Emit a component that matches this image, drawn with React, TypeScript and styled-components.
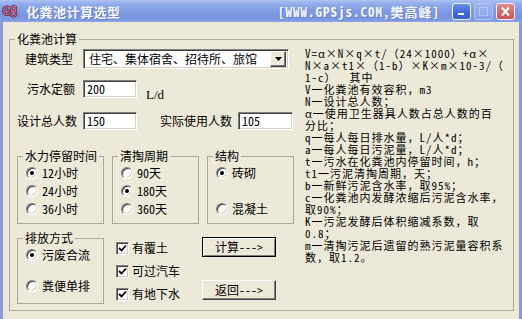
import styled, { createGlobalStyle } from 'styled-components';

const UI_FONT = `"Noto Sans Mono CJK SC", "Noto Sans CJK SC", "Liberation Sans", sans-serif`;

const GlobalStyle = createGlobalStyle`
  html, body { margin: 0; padding: 0; background: #ece9d8; }
  body { font-family: ${UI_FONT}; font-size: 12px; color: #000; }
`;

const Window = styled.div`
  width: 522px;
  height: 319px;
  overflow: hidden;
  display: flex;
  flex-direction: column;
  background: #8b97d9;
`;

const TitleBar = styled.div`
  height: 22px;
  flex-shrink: 0;
  display: flex;
  align-items: center;
  padding: 0 7px 0 2px;
  background: linear-gradient(180deg, #aec2f1 0%, #90aaea 20%, #7d99e0 55%, #7995df 85%, #8ba5e6 100%);
`;

const Title = styled.span`
  margin-left: 8px;
  font: bold 13px ${UI_FONT};
  letter-spacing: 0.5px;
  color: #f6f8ff;
  text-shadow: 1px 1px 0 #6a7fc8;
`;

const Credit = styled.span`
  margin-left: auto;
  margin-right: 12px;
  font: bold 13px ${UI_FONT};
  letter-spacing: 1px;
  color: #f6f8ff;
  text-shadow: 1px 1px 0 #6a7fc8;
`;

const CaptionButtons = styled.div`
  display: flex;
  gap: 3px;
`;

const captionBg = {
  min: 'linear-gradient(180deg, #6b8ee8 0%, #3f67d8 60%, #3a60d2 100%)',
  max: 'linear-gradient(180deg, #9fb5ee 0%, #86a0e6 100%)',
  close: 'linear-gradient(180deg, #e48a8a 0%, #d36464 60%, #c95656 100%)',
};

const CaptionButton = styled.span<{ $kind: 'min' | 'max' | 'close' }>`
  width: 19px;
  height: 17px;
  box-sizing: border-box;
  border: 1px solid ${p => (p.$kind === 'max' ? '#b6c7f2' : '#eef2ff')};
  border-radius: 3px;
  background: ${p => captionBg[p.$kind]};
  display: flex;
  align-items: center;
  justify-content: center;
`;

const Body = styled.div`
  flex: 1;
  margin: 0 3px;
  background: #ece9d8;
  padding: 11px 5px 0 6px;
`;

const GroupBox = styled.fieldset<{ $w?: number; $h: number }>`
  margin: 0;
  padding: 0;
  min-width: 0;
  width: ${p => (p.$w ? `${p.$w}px` : 'auto')};
  height: ${p => p.$h}px;
  box-sizing: border-box;
  border: 1px solid #aca899;
  display: flex;
  flex-direction: column;
  flex-shrink: 0;
`;

const Legend = styled.legend`
  margin-left: 5px;
  padding: 0 2px;
  font-size: 12px;
  line-height: 12px;
`;

const FormArea = styled.div`
  display: flex;
  flex: 1;
`;

const LeftCol = styled.div`
  width: 290px;
  display: flex;
  flex-direction: column;
`;

const Row = styled.div<{ $top: number; $indent: number; $gap?: number }>`
  display: flex;
  align-items: center;
  margin-top: ${p => p.$top}px;
  padding-left: ${p => p.$indent}px;
  gap: ${p => p.$gap ?? 0}px;
`;

const TopRow = styled(Row)`
  align-items: flex-start;
`;

const Label = styled.span<{ $left?: number; $right: number }>`
  margin-left: ${p => p.$left ?? 0}px;
  margin-right: ${p => p.$right}px;
  line-height: 12px;
  white-space: nowrap;
`;

const sunken = `
  box-sizing: border-box;
  border: 1px solid;
  border-color: #808080 #ffffff #ffffff #808080;
  box-shadow: inset 1px 1px 0 #404040, inset -1px -1px 0 #d4d0c8;
  background: #ffffff;
`;

const raised = `
  box-sizing: border-box;
  border: 1px solid;
  border-color: #ffffff #404040 #404040 #ffffff;
  box-shadow: inset -1px -1px 0 #808080, inset 1px 1px 0 #ece9d8;
  background: #ece9d8;
`;

const Combo = styled.div`
  ${sunken}
  width: 206px;
  height: 20px;
  display: flex;
  align-items: center;
  padding: 2px;
`;

const ComboText = styled.span`
  flex: 1;
  padding-left: 3px;
  line-height: 12px;
  white-space: nowrap;
`;

const ComboButton = styled.span`
  ${raised}
  width: 16px;
  height: 16px;
  display: flex;
  align-items: center;
  justify-content: center;
`;

const Field = styled.div<{ $w: number }>`
  ${sunken}
  width: ${p => p.$w}px;
  height: 18px;
  padding-left: 3px;
  display: flex;
  align-items: center;
  line-height: 12px;
`;

const Unit = styled.span`
  margin-left: 9px;
  align-self: flex-end;
  margin-bottom: -3px;
  line-height: 12px;
  font-family: "Liberation Serif", ${UI_FONT};
  font-size: 13px;
`;

const OptionList = styled.div<{ $pb: number }>`
  flex: 1;
  display: flex;
  flex-direction: column;
  justify-content: space-between;
  padding: 2px 0 ${p => p.$pb}px 8px;
`;

const Option = styled.div`
  display: flex;
  align-items: center;
  gap: 4px;
  height: 18px;
  line-height: 12px;
  white-space: nowrap;
`;

const RadioDot = styled.span<{ $on?: boolean }>`
  ${sunken}
  width: 12px;
  height: 12px;
  border-radius: 50%;
  display: flex;
  align-items: center;
  justify-content: center;
  flex-shrink: 0;

  &::after {
    content: '';
    width: 4px;
    height: 4px;
    border-radius: 50%;
    background: ${p => (p.$on ? '#000' : 'transparent')};
  }
`;

const CheckCol = styled.div`
  width: 86px;
  margin-left: 12px;
  padding-top: 7px;
  display: flex;
  flex-direction: column;
  gap: 5px;
`;

const CheckBox = styled.span`
  ${sunken}
  width: 13px;
  height: 13px;
  display: flex;
  align-items: center;
  justify-content: center;
  flex-shrink: 0;
`;

const CheckOption = styled(Option)`
  gap: 3px;
`;

const ButtonCol = styled.div`
  padding-top: 5px;
  display: flex;
  flex-direction: column;
  gap: 23px;
`;

const PushButton = styled.button<{ $default?: boolean }>`
  ${raised}
  width: 74px;
  height: 20px;
  padding: 0;
  font: 12px ${UI_FONT};
  line-height: 12px;
  color: #000;
  ${p =>
    p.$default &&
    `
    border-color: #000000;
    box-shadow: inset 1px 1px 0 #ffffff, inset -1px -1px 0 #808080;
  `}
`;

const Formula = styled.div`
  flex: 1;
  padding: 2px 0 0 5px;
`;

const FormulaLine = styled.div`
  height: 12px;
  line-height: 12px;
  font-size: 11px;
  letter-spacing: 1px;
  white-space: pre;
`;

const formulaLines = [
  'V=α×N×q×t/（24×1000）+α×',
  'N×a×t1×（1-b）×K×m×10-3/（',
  '1-c）  其中',
  'V一化粪池有效容积，m3',
  'N一设计总人数；',
  'α一使用卫生器具人数占总人数的百',
  '分比；',
  'q一每人每日排水量，L/人*d；',
  'a一每人每日污泥量，L/人*d；',
  't一污水在化粪池内停留时间，h；',
  't1一污泥清掏周期，天；',
  'b一新鲜污泥含水率，取95%；',
  'c一化粪池内发酵浓缩后污泥含水率，',
  '取90%；',
  'K一污泥发酵后体积缩减系数，取',
  '0.8；',
  'm一清掏污泥后遗留的熟污泥量容积系',
  '数，取1.2。',
];

const AppIcon = () => (
  <svg width="16" height="14" viewBox="0 0 16 14">
    <path d="M7 3.5 C3 1.5 0.8 5 2 8.5 C3 11.5 7 11.5 7.5 8.5 C7.8 6.5 5.5 6 4.5 7.5" fill="none" stroke="#3a2030" strokeWidth="2.6" />
    <path d="M7 3.5 C3 1.5 0.8 5 2 8.5 C3 11.5 7 11.5 7.5 8.5 C7.8 6.5 5.5 6 4.5 7.5" fill="none" stroke="#e0608a" strokeWidth="1.4" />
    <circle cx="11.5" cy="4.5" r="2.4" fill="none" stroke="#3a2030" strokeWidth="2.4" />
    <circle cx="11.5" cy="9.6" r="2.7" fill="none" stroke="#3a2030" strokeWidth="2.4" />
    <circle cx="11.5" cy="4.5" r="2.4" fill="none" stroke="#e0608a" strokeWidth="1.2" />
    <circle cx="11.5" cy="9.6" r="2.7" fill="none" stroke="#e0608a" strokeWidth="1.2" />
  </svg>
);

const Radio = ({ on, text }: { on?: boolean; text: string }) => (
  <Option>
    <RadioDot $on={on} />
    {text}
  </Option>
);

const Check = ({ text }: { text: string }) => (
  <CheckOption>
    <CheckBox>
      <svg width="9" height="9" viewBox="0 0 9 9">
        <path d="M1 4 L3.5 6.5 L8 1.5" fill="none" stroke="#000" strokeWidth="1.8" />
      </svg>
    </CheckBox>
    {text}
  </CheckOption>
);

export default function App() {
  return (
    <>
      <GlobalStyle />
      <Window>
        <TitleBar>
          <AppIcon />
          <Title>化粪池计算选型</Title>
          <Credit>[WWW.GPSjs.COM,樊高峰]</Credit>
          <CaptionButtons>
            <CaptionButton $kind="min">
              <svg width="13" height="11" viewBox="0 0 13 11">
                <rect x="3" y="7" width="6" height="2" fill="#fff" />
              </svg>
            </CaptionButton>
            <CaptionButton $kind="max">
              <svg width="13" height="11" viewBox="0 0 13 11">
                <rect x="2.5" y="1.5" width="8" height="8" fill="none" stroke="#b3c5f1" strokeWidth="1" />
              </svg>
            </CaptionButton>
            <CaptionButton $kind="close">
              <svg width="13" height="11" viewBox="0 0 13 11">
                <path d="M3 1.5 L10 9.5 M10 1.5 L3 9.5" stroke="#fff" strokeWidth="2" />
              </svg>
            </CaptionButton>
          </CaptionButtons>
        </TitleBar>

        <Body>
          <GroupBox $h={278}>
            <Legend>化粪池计算</Legend>
            <FormArea>
              <LeftCol>
                <Row $top={4} $indent={15}>
                  <Label $right={10}>建筑类型</Label>
                  <Combo>
                    <ComboText>住宅、集体宿舍、招待所、旅馆</ComboText>
                    <ComboButton>
                      <svg width="7" height="4" viewBox="0 0 7 4">
                        <path d="M0 0 H7 L3.5 4 Z" fill="#000" />
                      </svg>
                    </ComboButton>
                  </Combo>
                </Row>

                <Row $top={11} $indent={17}>
                  <Label $right={8}>污水定额</Label>
                  <Field $w={54}>200</Field>
                  <Unit>L/d</Unit>
                </Row>

                <Row $top={14} $indent={7}>
                  <Label $right={6}>设计总人数</Label>
                  <Field $w={54}>150</Field>
                  <Label $left={23} $right={6}>实际使用人数</Label>
                  <Field $w={55}>105</Field>
                </Row>

                <TopRow $top={20} $indent={7} $gap={8}>
                  <GroupBox $w={87} $h={74}>
                    <Legend>水力停留时间</Legend>
                    <OptionList $pb={5}>
                      <Radio on text="12小时" />
                      <Radio text="24小时" />
                      <Radio text="36小时" />
                    </OptionList>
                  </GroupBox>
                  <GroupBox $w={87} $h={74}>
                    <Legend>清掏周期</Legend>
                    <OptionList $pb={5}>
                      <Radio text="90天" />
                      <Radio on text="180天" />
                      <Radio text="360天" />
                    </OptionList>
                  </GroupBox>
                  <GroupBox $w={87} $h={74}>
                    <Legend>结构</Legend>
                    <OptionList $pb={5}>
                      <Radio on text="砖砌" />
                      <Radio text="混凝土" />
                    </OptionList>
                  </GroupBox>
                </TopRow>

                <TopRow $top={8} $indent={7}>
                  <GroupBox $w={87} $h={72}>
                    <Legend>排放方式</Legend>
                    <OptionList $pb={8}>
                      <Radio on text="污废合流" />
                      <Radio text="粪便单排" />
                    </OptionList>
                  </GroupBox>
                  <CheckCol>
                    <Check text="有覆土" />
                    <Check text="可过汽车" />
                    <Check text="有地下水" />
                  </CheckCol>
                  <ButtonCol>
                    <PushButton $default>计算---&gt;</PushButton>
                    <PushButton>返回---&gt;</PushButton>
                  </ButtonCol>
                </TopRow>
              </LeftCol>

              <Formula>
                {formulaLines.map((line, i) => (
                  <FormulaLine key={i}>{line}</FormulaLine>
                ))}
              </Formula>
            </FormArea>
          </GroupBox>
        </Body>
      </Window>
    </>
  );
}
